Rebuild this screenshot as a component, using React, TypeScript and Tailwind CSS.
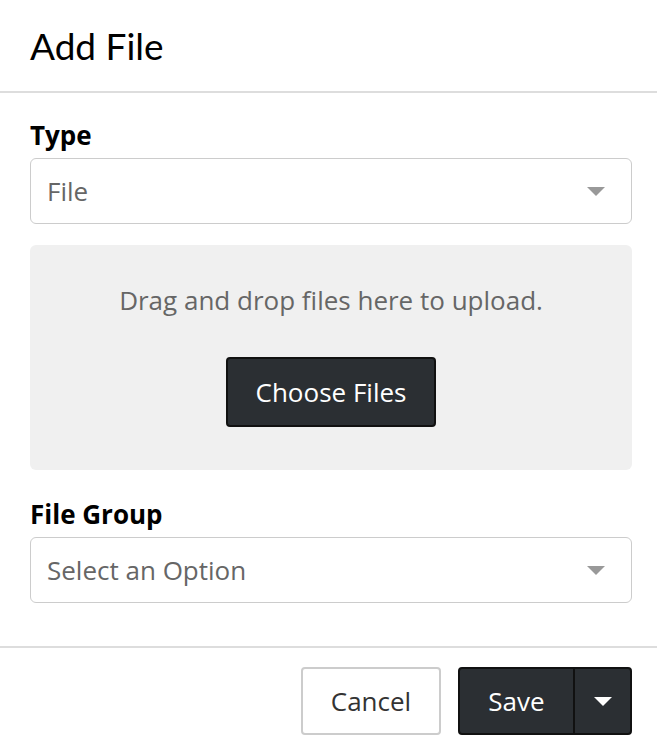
import { useState } from 'react';

function Caret({ className }: { className?: string }) {
    return (
        <svg width="18" height="9" viewBox="0 0 18 9" className={className}>
            <path d="M0 0 L18 0 L9 9 Z" fill="currentColor" />
        </svg>
    );
}

function SelectBox({ value }: { value: string }) {
    return (
        <div className="h-[66px] border border-[#cccccc] rounded-[6px] flex items-center justify-between pl-[16px] pr-[26px] bg-white">
            <span className="text-[26px] text-[#666666]">{value}</span>
            <Caret className="text-[#999999]" />
        </div>
    );
}

export default function App() {
    const [type] = useState('File');

    return (
        <div className="w-[657px] h-[750px] bg-white font-['Open_Sans',sans-serif] text-black overflow-hidden">
            <div className="h-[93px] border-b-2 border-[#dddddd] px-[30px] flex items-center">
                <h3 className="text-[37px] leading-none font-['Lato',sans-serif]">Add File</h3>
            </div>

            <div className="pl-[30px] pr-[25px] pt-[24px] pb-[43px]">
                <label className="block text-[26px] font-bold leading-[36px] mb-[5px]">Type</label>
                <SelectBox value={type} />

                <div className="mt-[21px] h-[225px] bg-[#f0f0f0] rounded-[6px] flex flex-col items-center pt-[37px]">
                    <p className="text-[26px] leading-[36px] text-[#666666]">Drag and drop files here to upload.</p>
                    <button className="mt-[39px] w-[210px] h-[70px] bg-[#2b2f33] border-2 border-[#111111] rounded-[4px] text-white text-[26px]">
                        Choose Files
                    </button>
                </div>

                <label className="block mt-[26px] text-[26px] font-bold leading-[36px] mb-[5px]">File Group</label>
                <SelectBox value="Select an Option" />
            </div>

            <div className="border-t-2 border-[#dddddd] flex justify-end gap-[17px] px-[25px] pt-[19px]">
                <button className="w-[140px] h-[68px] border-2 border-[#cccccc] rounded-[4px] bg-white text-[26px] text-[#333333]">
                    Cancel
                </button>
                <div className="flex h-[68px] bg-[#2b2f33] border-2 border-[#111111] rounded-[4px] text-white">
                    <button className="w-[113px] text-[26px]">Save</button>
                    <div className="w-[2px] bg-[#111111]" />
                    <button className="w-[55px] flex items-center justify-center">
                        <Caret className="text-white" />
                    </button>
                </div>
            </div>
        </div>
    );
}
